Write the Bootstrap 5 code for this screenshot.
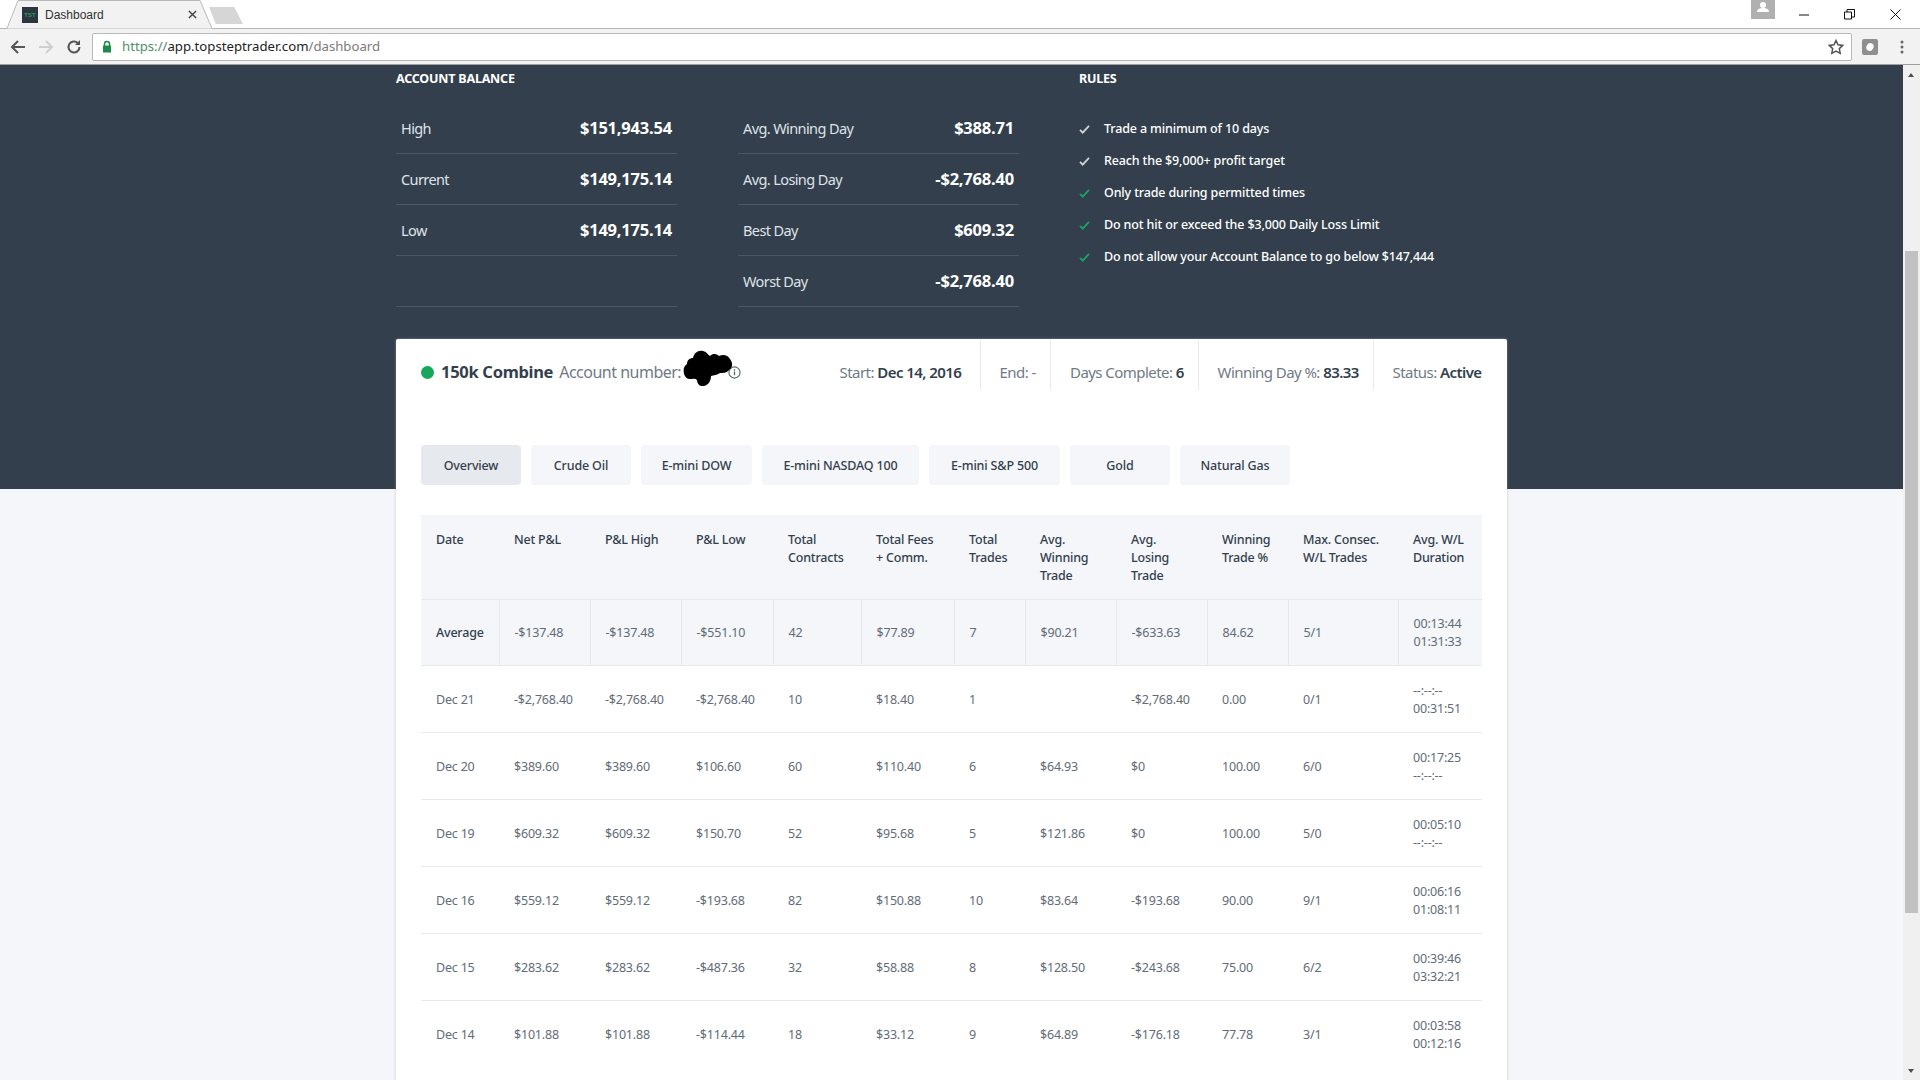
<!DOCTYPE html>
<html lang="en">
<head>
    <meta charset="UTF-8">
    <title>Dashboard</title>
    <link href="https://cdn.jsdelivr.net/npm/bootstrap@5.3.0/dist/css/bootstrap.min.css" rel="stylesheet">
    <style>
        html, body { height: 100%; overflow: hidden; }
        body { font-family: "Noto Sans", "Liberation Sans", sans-serif; background: #f4f6fa; color: #333f4d; }

        /* browser chrome */
        .chrome-tabs { height: 29px; background: #fff; border-bottom: 1px solid #b8b8b8; }
        .tab-active { width: 212px; height: 29px; margin-left: 3px; position: relative; font: 12px "Liberation Sans", sans-serif; color: #333; padding: 0 18px 0 19px; gap: 7px; }
        .tab-shape { position: absolute; left: 0; top: 0; }
        .favicon { width: 16px; height: 16px; background: #2c3540; color: #1f9e57; font: bold 6px "Liberation Sans", sans-serif; position: relative; }
        .tab-label { position: relative; flex-grow: 1; }
        .tab-close { position: relative; }
        .tab-new { width: 34px; height: 17px; margin: 7px 0 0 -6px; background: #d6d6d6; clip-path: polygon(0 0, 74% 0, 100% 100%, 20% 100%); }
        .win-btns { padding-right: 2px; }
        .win-btn { width: 45.5px; height: 28px; }
        .avatar { width: 24px; height: 19px; background: #b0b0b0; margin-right: 7px; }
        .chrome-bar { height: 36px; background: #f2f2f2; border-bottom: 1px solid #a0a0a0; padding: 0 16px 0 9px; gap: 10px; }
        .url-box { height: 28px; background: #fff; border: 1px solid #b8b8b8; border-radius: 2px; margin-left: -1px; padding: 0 7px 0 9px; font-size: 13.2px; color: #222; }
        .url-box .muted-url { color: #7b7b7b; }
        .url-box .scheme { color: #4f8f6a; }
        .lock-icon { margin-right: 10px; }
        .menu-dots { margin-left: 12px; }

        .page-wrap { height: 1015px; overflow: hidden; }
        .page-main { width: 1903px; height: 100%; position: relative; overflow: hidden; }
        .fake-scroll { width: 17px; background: #f0f0f0; position: relative; }
        .scroll-thumb { position: absolute; left: 2px; right: 2px; top: 186px; height: 662px; background: #c1c1c1; }
        .scroll-arrow { position: absolute; left: 5px; width: 0; height: 0; border-left: 3.5px solid transparent; border-right: 3.5px solid transparent; }
        .arrow-up { top: 8px; border-bottom: 4px solid #505050; }
        .arrow-down { bottom: 7px; border-top: 4px solid #505050; }

        /* dark summary */
        .dark-panel { background: #333f4d; height: 424px; padding-left: 396px; color: #fff; }
        .col-stats { width: 281px; }
        .col-gap { margin-right: 61px; }
        .col-gap-last { margin-right: 60px; }
        .section-title { font-size: 12.5px; font-weight: 700; height: 27px; line-height: 27px; text-transform: uppercase; letter-spacing: -.2px; }
        .stat-top { height: 11px; }
        .rule-top { height: 21px; }
        .stat-line { height: 51px; border-bottom: 1px solid #47586c; padding: 1px 5px 0; font-size: 14.5px; letter-spacing: -.6px; color: #dfe3e8; }
        .stat-line b { font-size: 16.5px; color: #fff; font-weight: 700; letter-spacing: -.2px; }
        .rule-item { height: 32px; font-size: 12.5px; font-weight: 500; letter-spacing: -.14px; }
        .rule-item svg { width: 11px; height: 9px; margin-right: 14px; }

        /* card */
        .combine-card { position: absolute; left: 396px; top: 274px; width: 1111px; height: 760px; background: #fff; box-shadow: 0 0 3px rgba(160,170,180,.6); border-radius: 2px; padding: 0 26px 0 25px; }
        .card-top { height: 50px; margin-top: 1px; font-size: 15px; letter-spacing: -.55px; color: #6f7a86; white-space: nowrap; }
        .top-left { padding-top: 14px; }
        .status-dot { width: 13px; height: 13px; background: #16a75c; border-radius: 50%; margin-right: 7px; }
        .combine-name { font-size: 16.5px; font-weight: 700; color: #333f4d; letter-spacing: -.3px; margin-right: 6px; }
        .acct { position: relative; font-size: 16px; letter-spacing: -.5px; }
        .scribble { position: absolute; left: 124px; top: -10px; }
        .info-icon { margin-left: 47px; }
        .meta-cell { height: 50px; border-left: 1px solid #e6e9ee; padding: 14px 0 0 19px; }
        .meta-start { width: 140px; border-left: 0; padding-left: 0; }
        .meta-end { width: 70.5px; }
        .meta-days { width: 147.5px; }
        .meta-win { width: 175px; }
        .meta-status { width: 108.500px; }
        .meta-cell b { font-weight: 600; color: #333f4d; }
        .tab-row { margin-top: 55px; gap: 10px; }
        .tab-btn { height: 40px; background: #f4f6fa; border: 0; border-radius: 4px; font-size: 12.5px; font-weight: 500; color: #333f4d; letter-spacing: -.15px; padding: 2px 0 0; }
        .tab-btn.on { background: #e6e9ee; }
        .tab-w100 { width: 100px; }
        .tab-w111 { width: 111px; }
        .tab-w157 { width: 157px; }
        .tab-w131 { width: 131px; }
        .tab-w110 { width: 110px; }
        .tbl-wrap { margin-top: 30px; }

        .stats-table { table-layout: fixed; width: 1061px; margin: 0; font-size: 12.5px; letter-spacing: -.2px; border-collapse: collapse; }
        .stats-table th { background: #f4f6fa; font-weight: 500; color: #333f4d; height: 84px; vertical-align: top; padding: 16px 0 0 15px; line-height: 18px; border: 0; border-bottom: 1px solid #e6e9ee; }
        .stats-table td { height: 67px; padding: 2px 0 0 15px; vertical-align: middle; line-height: 18px; border: 0; border-bottom: 1px solid #e6e9ee; background: #fff; color: #626c77; }
        .stats-table tr.avg-row td { height: 66px; background: #f4f6fa; border-left: 1px solid #e6e9ee; }
        .stats-table tr.avg-row td:first-child { border-left: 0; font-weight: 500; color: #333f4d; }
        .stats-table tr:last-child td { border-bottom: 0; }
    </style>
</head>
<body class="d-flex flex-column">

    <div class="chrome-tabs d-flex">
        <div class="tab-active d-flex align-items-center">
            <svg class="tab-shape" width="212" height="29" viewBox="0 0 212 29"><path d="M0 28.500h4L15 .5h182l12 28h3" fill="#f2f2f2" stroke="#b8b8b8"/></svg>
            <span class="favicon d-flex align-items-center justify-content-center">TST</span>
            <span class="tab-label">Dashboard</span>
            <svg class="tab-close" width="9" height="9" viewBox="0 0 10 10"><path d="M1 1l8 8M9 1l-8 8" stroke="#444" stroke-width="1.6"/></svg>
        </div>
        <div class="tab-new"></div>
        <div class="ms-auto d-flex align-items-start win-btns">
            <div class="avatar d-flex justify-content-center">
                <svg width="12" height="13" viewBox="0 0 12 13"><circle cx="6" cy="5" r="3" fill="#fff"/><path d="M0 12c0-3 3-4 6-4s6 1 6 4z" fill="#fff"/></svg>
            </div>
            <div class="win-btn d-flex align-items-center justify-content-center"><svg width="11" height="11" viewBox="0 0 11 11"><path d="M0 6h10" stroke="#111"/></svg></div>
            <div class="win-btn d-flex align-items-center justify-content-center"><svg width="11" height="11" viewBox="0 0 11 11"><path d="M.5 3h7v7h-7zM3 3V.5h7.5V8H8" fill="none" stroke="#111"/></svg></div>
            <div class="win-btn d-flex align-items-center justify-content-center"><svg width="11" height="11" viewBox="0 0 11 11"><path d="M.5.5l10 10M10.500.5l-10 10" stroke="#111"/></svg></div>
        </div>
    </div>
    <div class="chrome-bar d-flex align-items-center">
        <svg width="18" height="18" viewBox="0 0 18 18"><path d="M16 9H3M9 3L3 9l6 6" fill="none" stroke="#555" stroke-width="2"/></svg>
        <svg width="18" height="18" viewBox="0 0 18 18"><path d="M2 9h13M9 3l6 6-6 6" fill="none" stroke="#cfcfcf" stroke-width="2"/></svg>
        <svg width="18" height="18" viewBox="0 0 18 18"><path d="M14.500 9a5.500 5.500 0 1 1-1.700-4" fill="none" stroke="#555" stroke-width="2"/><path d="M15 2v5h-5z" fill="#555"/></svg>
        <div class="url-box flex-grow-1 d-flex align-items-center">
            <svg class="lock-icon" width="10" height="13" viewBox="0 0 10 13"><path d="M2.500 6V4a2.500 2.500 0 0 1 5 0v2" fill="none" stroke="#1b8a4b" stroke-width="1.500"/><rect x="1" y="5.500" width="8" height="7" fill="#1b8a4b"/></svg>
            <span><span class="scheme">https://</span>app.topsteptrader.com<span class="muted-url">/dashboard</span></span>
            <svg width="16" height="16" viewBox="0 0 16 16" class="ms-auto"><path d="M8 1.500l2 4.300 4.700.6-3.400 3.200.9 4.700L8 12l-4.200 2.300.9-4.700L1.300 6.400 6 5.800z" fill="none" stroke="#555" stroke-width="1.500"/></svg>
        </div>
        <svg width="16" height="16" viewBox="0 0 16 16"><rect width="16" height="16" rx="2" fill="#8f8f8f"/><ellipse cx="8" cy="8" rx="3.500" ry="4" fill="#fff" transform="rotate(30 8 8)"/></svg>
        <svg class="menu-dots" width="4" height="14" viewBox="0 0 4 14"><circle cx="2" cy="2" r="1.500" fill="#666"/><circle cx="2" cy="7" r="1.500" fill="#666"/><circle cx="2" cy="12" r="1.500" fill="#666"/></svg>
    </div>

    <div class="page-wrap d-flex">
        <div class="page-main">
            <div class="dark-panel d-flex">
                <div class="col-stats col-gap">
                    <div class="section-title">Account Balance</div>
                    <div class="stat-top"></div>
                    <div class="stat-line d-flex justify-content-between align-items-center"><span>High</span><b>$151,943.54</b></div>
                    <div class="stat-line d-flex justify-content-between align-items-center"><span>Current</span><b>$149,175.14</b></div>
                    <div class="stat-line d-flex justify-content-between align-items-center"><span>Low</span><b>$149,175.14</b></div>
                    <div class="stat-line"></div>
                </div>
                <div class="col-stats col-gap-last">
                    <div class="section-title">&nbsp;</div>
                    <div class="stat-top"></div>
                    <div class="stat-line d-flex justify-content-between align-items-center"><span>Avg. Winning Day</span><b>$388.71</b></div>
                    <div class="stat-line d-flex justify-content-between align-items-center"><span>Avg. Losing Day</span><b>-$2,768.40</b></div>
                    <div class="stat-line d-flex justify-content-between align-items-center"><span>Best Day</span><b>$609.32</b></div>
                    <div class="stat-line d-flex justify-content-between align-items-center"><span>Worst Day</span><b>-$2,768.40</b></div>
                </div>
                <div>
                    <div class="section-title">Rules</div>
                    <div class="rule-top"></div>
                    <div class="rule-item d-flex align-items-center"><svg viewBox="0 0 12 10"><path d="M1 5.500l3 3L11 1" fill="none" stroke="#d0d3d7" stroke-width="2"/></svg>Trade a minimum of 10 days</div>
                    <div class="rule-item d-flex align-items-center"><svg viewBox="0 0 12 10"><path d="M1 5.500l3 3L11 1" fill="none" stroke="#d0d3d7" stroke-width="2"/></svg>Reach the $9,000+ profit target</div>
                    <div class="rule-item d-flex align-items-center"><svg viewBox="0 0 12 10"><path d="M1 5.500l3 3L11 1" fill="none" stroke="#16a75c" stroke-width="2"/></svg>Only trade during permitted times</div>
                    <div class="rule-item d-flex align-items-center"><svg viewBox="0 0 12 10"><path d="M1 5.500l3 3L11 1" fill="none" stroke="#16a75c" stroke-width="2"/></svg>Do not hit or exceed the $3,000 Daily Loss Limit</div>
                    <div class="rule-item d-flex align-items-center"><svg viewBox="0 0 12 10"><path d="M1 5.500l3 3L11 1" fill="none" stroke="#16a75c" stroke-width="2"/></svg>Do not allow your Account Balance to go below $147,444</div>
                </div>
            </div>

            <div class="combine-card">
                <div class="card-top d-flex">
                    <div class="top-left d-flex align-items-center">
                        <span class="status-dot"></span>
                        <span class="combine-name">150k Combine</span>
                        <span class="acct">Account number:
                            <svg class="scribble" width="50" height="36" viewBox="0 0 50 36"><path d="M1 24c-1-5 0-8 3-10 0-4 3-6 6-6 1-5 5-8 10-7 4 1 5 4 7 5 3-3 7-2 9 0 4-2 9-1 11 3 3 4 3 8-1 11-2 3-6 3-9 3-3 2-6 2-9 3 0 4-2 9-7 10-4 1-7-2-7-6-2-2-4-1-7-1-3 0-5-2-6-5z" fill="#000"/></svg>
                        </span>
                        <svg class="info-icon" width="13" height="13" viewBox="0 0 14 14"><circle cx="7" cy="7" r="6" fill="none" stroke="#5b6572" stroke-width="1.200"/><path d="M7 6v4M7 3.500v1.500" stroke="#5b6572" stroke-width="1.400"/></svg>
                    </div>
                    <div class="ms-auto d-flex">
                        <div class="meta-cell meta-start d-flex align-items-center"><span>Start: <b>Dec 14, 2016</b></span></div>
                        <div class="meta-cell meta-end d-flex align-items-center"><span>End: -</span></div>
                        <div class="meta-cell meta-days d-flex align-items-center"><span>Days Complete: <b>6</b></span></div>
                        <div class="meta-cell meta-win d-flex align-items-center"><span>Winning Day %: <b>83.33</b></span></div>
                        <div class="meta-cell meta-status d-flex align-items-center"><span>Status: <b>Active</b></span></div>
                    </div>
                </div>

                <div class="tab-row d-flex">
                    <button class="tab-btn tab-w100 on">Overview</button>
                    <button class="tab-btn tab-w100">Crude Oil</button>
                    <button class="tab-btn tab-w111">E-mini DOW</button>
                    <button class="tab-btn tab-w157">E-mini NASDAQ 100</button>
                    <button class="tab-btn tab-w131">E-mini S&amp;P 500</button>
                    <button class="tab-btn tab-w100">Gold</button>
                    <button class="tab-btn tab-w110">Natural Gas</button>
                </div>

                <div class="tbl-wrap">
                    <table class="stats-table table">
                        <colgroup>
                            <col style="width:78px"><col style="width:91px"><col style="width:91px"><col style="width:92px"><col style="width:88px"><col style="width:93px"><col style="width:71px"><col style="width:91px"><col style="width:91px"><col style="width:81px"><col style="width:110px"><col style="width:84px">
                        </colgroup>
                        <thead>
                            <tr>
                                <th>Date</th><th>Net P&amp;L</th><th>P&amp;L High</th><th>P&amp;L Low</th><th>Total<br>Contracts</th><th>Total Fees<br>+ Comm.</th><th>Total<br>Trades</th><th>Avg.<br>Winning<br>Trade</th><th>Avg.<br>Losing<br>Trade</th><th>Winning<br>Trade %</th><th>Max. Consec.<br>W/L Trades</th><th>Avg. W/L<br>Duration</th>
                            </tr>
                        </thead>
                        <tbody>
                            <tr class="avg-row"><td>Average</td><td>-$137.48</td><td>-$137.48</td><td>-$551.10</td><td>42</td><td>$77.89</td><td>7</td><td>$90.21</td><td>-$633.63</td><td>84.62</td><td>5/1</td><td>00:13:44<br>01:31:33</td></tr>
                            <tr><td>Dec 21</td><td>-$2,768.40</td><td>-$2,768.40</td><td>-$2,768.40</td><td>10</td><td>$18.40</td><td>1</td><td></td><td>-$2,768.40</td><td>0.00</td><td>0/1</td><td>--:--:--<br>00:31:51</td></tr>
                            <tr><td>Dec 20</td><td>$389.60</td><td>$389.60</td><td>$106.60</td><td>60</td><td>$110.40</td><td>6</td><td>$64.93</td><td>$0</td><td>100.00</td><td>6/0</td><td>00:17:25<br>--:--:--</td></tr>
                            <tr><td>Dec 19</td><td>$609.32</td><td>$609.32</td><td>$150.70</td><td>52</td><td>$95.68</td><td>5</td><td>$121.86</td><td>$0</td><td>100.00</td><td>5/0</td><td>00:05:10<br>--:--:--</td></tr>
                            <tr><td>Dec 16</td><td>$559.12</td><td>$559.12</td><td>-$193.68</td><td>82</td><td>$150.88</td><td>10</td><td>$83.64</td><td>-$193.68</td><td>90.00</td><td>9/1</td><td>00:06:16<br>01:08:11</td></tr>
                            <tr><td>Dec 15</td><td>$283.62</td><td>$283.62</td><td>-$487.36</td><td>32</td><td>$58.88</td><td>8</td><td>$128.50</td><td>-$243.68</td><td>75.00</td><td>6/2</td><td>00:39:46<br>03:32:21</td></tr>
                            <tr><td>Dec 14</td><td>$101.88</td><td>$101.88</td><td>-$114.44</td><td>18</td><td>$33.12</td><td>9</td><td>$64.89</td><td>-$176.18</td><td>77.78</td><td>3/1</td><td>00:03:58<br>00:12:16</td></tr>
                        </tbody>
                    </table>
                </div>
            </div>
        </div>
        <div class="fake-scroll">
            <span class="scroll-arrow arrow-up"></span>
            <div class="scroll-thumb"></div>
            <span class="scroll-arrow arrow-down"></span>
        </div>
    </div>

    <script src="https://cdn.jsdelivr.net/npm/bootstrap@5.3.0/dist/js/bootstrap.bundle.min.js"></script>
</body>
</html>
